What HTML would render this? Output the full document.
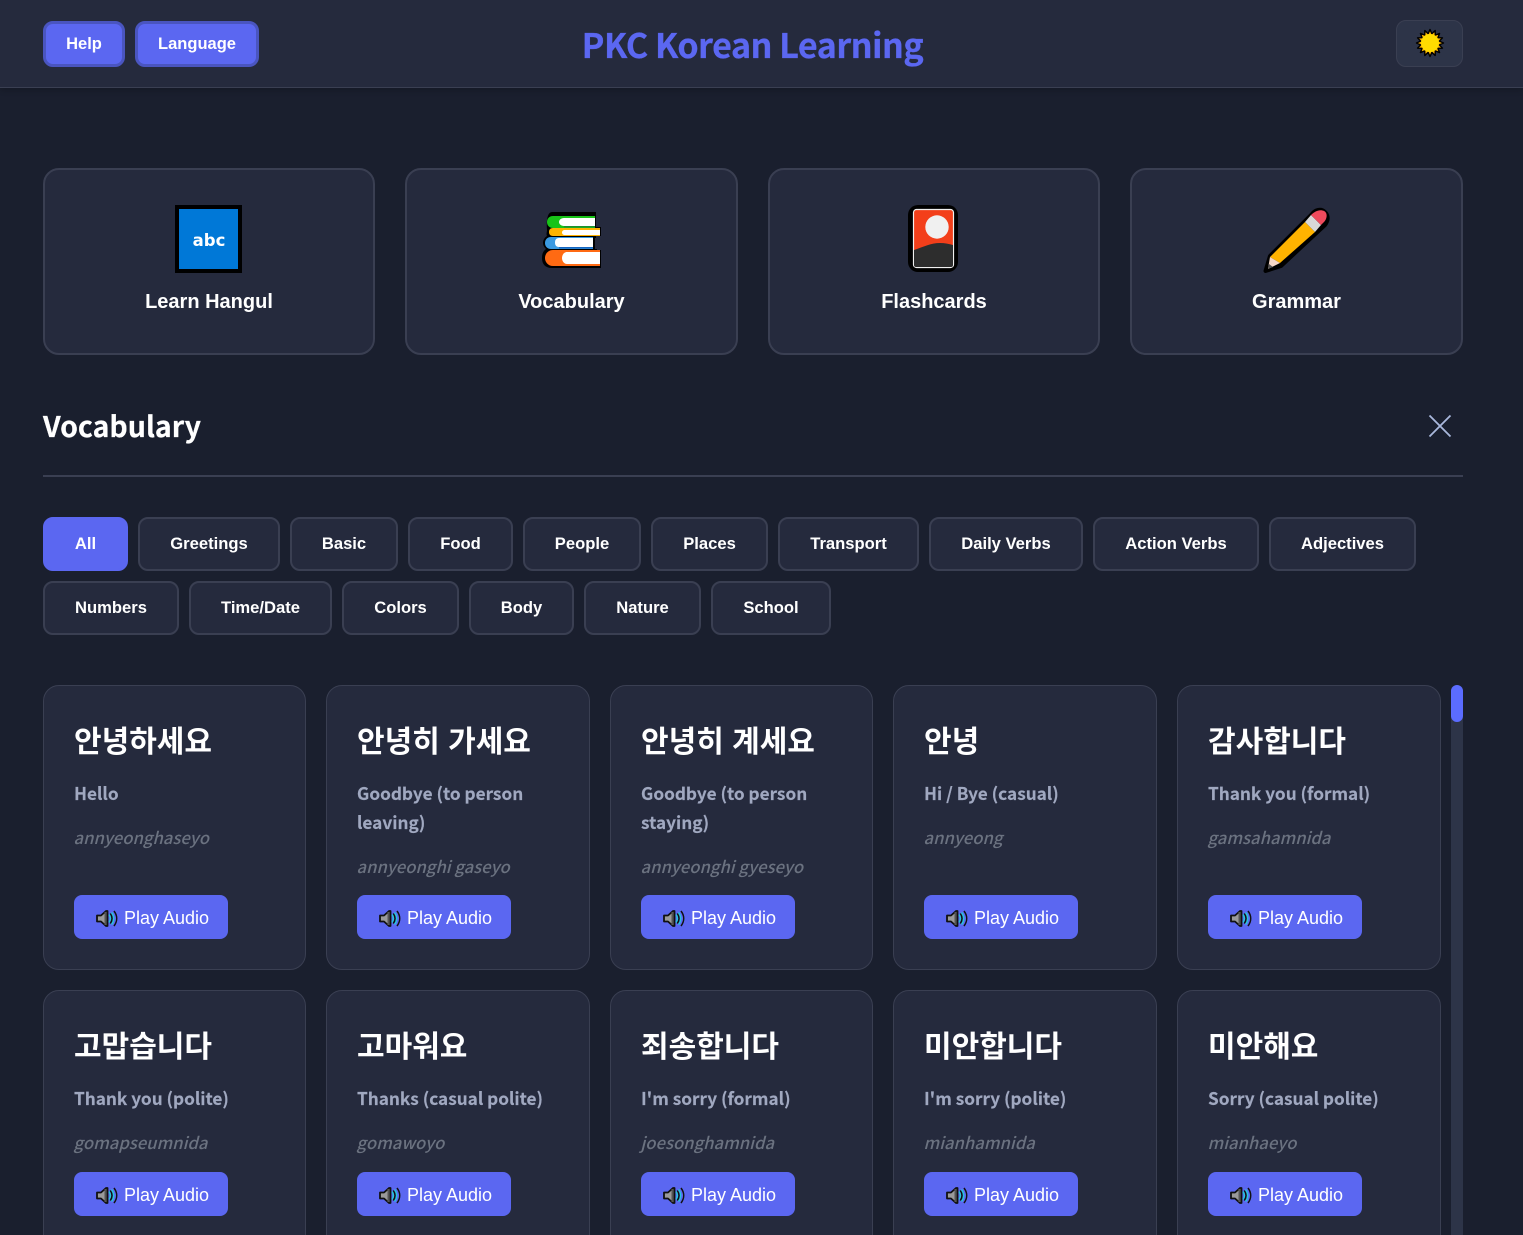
<!DOCTYPE html>
<html lang="en"><head><meta charset="utf-8"><title>PKC Korean Learning</title>
<style>
*{box-sizing:border-box;margin:0;padding:0}
html,body{width:1523px;height:1235px;overflow:hidden;background:#1a1f2e}
body{position:relative;font-family:"Liberation Sans","Noto Sans CJK KR",sans-serif;color:#fff}
.a{position:absolute}
header{position:absolute;left:0;top:0;width:1523px;height:88px;background:#252a3d;border-bottom:1px solid #3a3f52;box-shadow:0 2px 6px rgba(0,0,0,.2)}
.hb{position:absolute;top:21px;height:46px;background:#5b67f1;border:3px solid #4a55c0;border-radius:10px;font-weight:700;font-size:16.5px;line-height:40px;text-align:center;color:#fff}
h1{position:absolute;left:0;top:19px;width:1505px;text-align:center;font:700 34px/50px "Noto Sans CJK KR",sans-serif;color:#5b67f1;letter-spacing:-.45px;-webkit-text-stroke:.3px #5b67f1}
.theme{position:absolute;left:1396px;top:20px;width:67px;height:47px;background:#2d3448;border:1px solid #3a3f52;border-radius:10px}
.nav{position:absolute;top:168px;height:187px;background:#252a3d;border:2px solid #3a3f52;border-radius:16px}
.nav span{position:absolute;left:0;right:0;top:120px;text-align:center;font-weight:700;font-size:20px;line-height:24px;color:#fff}
.nav svg{position:absolute}
h2{position:absolute;left:43px;top:405px;font:700 28.5px/42px "Noto Sans CJK KR",sans-serif;color:#fff;-webkit-text-stroke:.2px #fff}
.f{position:absolute;height:54px;background:#252a3d;border:2px solid #3a3f52;border-radius:10px;font-weight:700;font-size:16.6px;line-height:50px;text-align:center;color:#fff}
.f.on{background:#5b67f1;border-color:#5b67f1}
.c{position:absolute;background:#252a3d;border:1px solid #3a3f52;border-radius:16px}
.c b{position:absolute;left:30px;top:29px;font:700 30px/48px "Noto Sans CJK KR",sans-serif;color:#fff;white-space:nowrap;word-spacing:1.5px}
.c p{position:absolute;left:30px;width:205px;top:92px;font:700 17.2px/29px "Noto Sans CJK KR",sans-serif;color:#a0a8c0;-webkit-text-stroke:.15px #a0a8c0}
.c i{position:absolute;left:29.5px;margin-top:-1px;font:italic 500 16.65px/29px "Noto Sans CJK KR",sans-serif;color:#6b7280;white-space:nowrap}
.p{position:absolute;left:30px;height:44px;width:154px;background:#5b67f1;border-radius:8px;font-size:18px;line-height:46px;color:#fff;padding-left:50px;white-space:nowrap}
.p svg{position:absolute;left:20.500px;top:13px}
</style></head><body>
<svg width="0" height="0" style="position:absolute"><defs>
<g id="spk"><path d="M2 7.500h4l5-4.500h1.500v15H11l-5-4.500H2z" fill="#9a9a9a" stroke="#111" stroke-width="1.800" stroke-linejoin="round"/><path d="M10.500 4v13" stroke="#555" stroke-width="2"/><path d="M14 6.500c1.800 2.500 1.800 5.500 0 8M16.500 4.500c2.800 3.700 2.800 8.300 0 12" fill="none" stroke="#27c4de" stroke-width="1.600"/><path d="M15.300 5.500c2.300 3.300 2.300 6.700 0 10M19 3c3.600 4.800 3.600 10.200 0 15" fill="none" stroke="#111" stroke-width="1.500"/></g>
</defs></svg>

<header>
<div class="hb" style="left:43px;width:82px">Help</div>
<div class="hb" style="left:135px;width:124px">Language</div>
<h1>PKC Korean Learning</h1>
<div class="theme">
<svg class="a" style="left:18px;top:7px" width="30" height="30" viewBox="0 0 30 30"><polygon transform="translate(15 15)" points="13.5,0 9.32,1.85 12.47,5.17 7.89,5.28 9.55,9.55 5.28,7.89 5.17,12.47 1.85,9.32 0,13.5 -1.85,9.32 -5.17,12.47 -5.28,7.89 -9.55,9.55 -7.89,5.28 -12.47,5.17 -9.32,1.85 -13.5,0 -9.32,-1.85 -12.47,-5.17 -7.89,-5.28 -9.55,-9.55 -5.28,-7.89 -5.17,-12.47 -1.85,-9.32 0,-13.5 1.85,-9.32 5.17,-12.47 5.28,-7.89 9.55,-9.55 7.89,-5.28 12.47,-5.17 9.32,-1.85" fill="#ffb300" stroke="#000" stroke-width="1.400" stroke-linejoin="round"/><circle cx="15" cy="15" r="9" fill="#ffdc00"/></svg>
</div>
</header>

<div class="nav" style="left:43px;width:332px">
<svg style="left:130px;top:35px" width="68" height="68" viewBox="0 0 68 68"><rect x="2" y="2" width="63" height="64" fill="#0078d7" stroke="#000" stroke-width="4"/><text x="34" y="41" text-anchor="middle" font-family="DejaVu Sans,sans-serif" font-weight="700" font-size="16.500" fill="#fff">abc</text></svg>
<span>Learn Hangul</span></div>

<div class="nav" style="left:405px;width:333px">
<svg style="left:133px;top:40px" width="64" height="62" viewBox="0 0 64 62">
<path d="M12 2h44v15h5v9h-5v2h-1v11h2v1h4v18H12C5 58 2 54 2 48c0-4 1-7 4-9-2-2-3-4-3-6 0-3 2-6 4-7-1-2 0-4 0-6C6 9 8 2 12 2z" fill="#000"/>
<path d="M13 6h42v12H13C9 18 7 15 7 12s2-6 6-6z" fill="#18c318"/><path d="M24 8h31v8H24c-3 0-5-2-5-4s2-4 5-4z" fill="#fff"/><rect x="24" y="16" width="31" height="1.500" fill="#1f8f2f"/>
<path d="M13 18h47v8H13c-3 0-4-2-4-4s1-4 4-4z" fill="#ffb300"/><path d="M25 20h35v5H25c-2 0-3-1-3-2.500s1-2.500 3-2.500z" fill="#fff"/>
<path d="M11 27h42v12H11c-4 0-6-3-6-6s2-6 6-6z" fill="#3b9ae1"/><path d="M19 28h34v9H19c-3 0-4-2-4-4.500s1-4.500 4-4.500z" fill="#fff"/><rect x="19" y="37" width="34" height="1.500" fill="#1565c0"/>
<path d="M13 40h47v16H13C8 56 5 52 5 48s3-8 8-8z" fill="#ff6a13"/><path d="M27 42h33v12H27c-3 0-5-3-5-6s2-6 5-6z" fill="#fff"/>
</svg>
<span>Vocabulary</span></div>

<div class="nav" style="left:768px;width:332px">
<svg style="left:138px;top:35px" width="52" height="68" viewBox="0 0 52 68"><rect x="0" y="0" width="50" height="67" rx="10" fill="#000"/><rect x="5.500" y="4.500" width="40" height="58" rx="3" fill="#f33f1a" stroke="#f0f0f0" stroke-width="1.200"/><circle cx="29" cy="22" r="11.700" fill="#f0f0f0"/><path d="M6 45c9-3 17-7 26-7 5 0 9 1 13 2v20c0 1.500-1 2-2 2H8c-1 0-2-.5-2-2z" fill="#2d2d2d"/></svg>
<span>Flashcards</span></div>

<div class="nav" style="left:1130px;width:333px">
<svg style="left:131px;top:35px" width="70" height="70" viewBox="0 0 70 70"><path d="M2.500 66L7 51 49 9c3-4 9-6 13-2s3 9 0 13L18 61z" fill="#000" stroke="#000" stroke-width="4" stroke-linejoin="round"/><path d="M7 52L42 17l10 10L17 58z" fill="#ffb300"/><path d="M7 52l10 6-12 6z" fill="#f6d8c8"/><path d="M6 59l4 3-5 2z" fill="#555"/><path d="M42 17l6-7 10 10-6 7z" fill="#d8d8d8"/><path d="M48 10c4-4 9-6 13-4s3 8 0 11l-3 3z" fill="#ef4a5c"/></svg>
<span>Grammar</span></div>

<h2>Vocabulary</h2>
<svg class="a" style="left:1428px;top:414px" width="24" height="24" viewBox="0 0 24 24"><path d="M1.500 1.500l21 21M22.500 1.500l-21 21" stroke="#a9b8dd" stroke-width="1.800" fill="none"/></svg>
<div class="a" style="left:43px;top:475px;width:1420px;height:2px;background:#3a3f52"></div>

<div class="f on" style="left:43px;top:517px;width:85px">All</div>
<div class="f" style="left:138px;top:517px;width:142px">Greetings</div>
<div class="f" style="left:290px;top:517px;width:108px">Basic</div>
<div class="f" style="left:408px;top:517px;width:105px">Food</div>
<div class="f" style="left:523px;top:517px;width:118px">People</div>
<div class="f" style="left:651px;top:517px;width:117px">Places</div>
<div class="f" style="left:778px;top:517px;width:141px">Transport</div>
<div class="f" style="left:929px;top:517px;width:154px">Daily Verbs</div>
<div class="f" style="left:1093px;top:517px;width:166px">Action Verbs</div>
<div class="f" style="left:1269px;top:517px;width:147px">Adjectives</div>
<div class="f" style="left:43px;top:581px;width:136px">Numbers</div>
<div class="f" style="left:189px;top:581px;width:143px">Time/Date</div>
<div class="f" style="left:342px;top:581px;width:117px">Colors</div>
<div class="f" style="left:469px;top:581px;width:105px">Body</div>
<div class="f" style="left:584px;top:581px;width:117px">Nature</div>
<div class="f" style="left:711px;top:581px;width:120px">School</div>

<div class="c" style="left:43px;top:685px;width:263px;height:285px"><b>안녕하세요</b><p>Hello</p><i style="top:138px">annyeonghaseyo</i><div class="p" style="top:209px"><svg width="24" height="20" viewBox="0 0 24 20"><use href="#spk"/></svg>Play Audio</div></div>
<div class="c" style="left:326px;top:685px;width:264px;height:285px"><b>안녕히 가세요</b><p>Goodbye (to person leaving)</p><i style="top:167px">annyeonghi gaseyo</i><div class="p" style="top:209px"><svg width="24" height="20" viewBox="0 0 24 20"><use href="#spk"/></svg>Play Audio</div></div>
<div class="c" style="left:610px;top:685px;width:263px;height:285px"><b>안녕히 계세요</b><p>Goodbye (to person staying)</p><i style="top:167px">annyeonghi gyeseyo</i><div class="p" style="top:209px"><svg width="24" height="20" viewBox="0 0 24 20"><use href="#spk"/></svg>Play Audio</div></div>
<div class="c" style="left:893px;top:685px;width:264px;height:285px"><b>안녕</b><p>Hi / Bye (casual)</p><i style="top:138px">annyeong</i><div class="p" style="top:209px"><svg width="24" height="20" viewBox="0 0 24 20"><use href="#spk"/></svg>Play Audio</div></div>
<div class="c" style="left:1177px;top:685px;width:264px;height:285px"><b>감사합니다</b><p>Thank you (formal)</p><i style="top:138px">gamsahamnida</i><div class="p" style="top:209px"><svg width="24" height="20" viewBox="0 0 24 20"><use href="#spk"/></svg>Play Audio</div></div>

<div class="c" style="left:43px;top:990px;width:263px;height:280px"><b>고맙습니다</b><p>Thank you (polite)</p><i style="top:138px">gomapseumnida</i><div class="p" style="top:181px"><svg width="24" height="20" viewBox="0 0 24 20"><use href="#spk"/></svg>Play Audio</div></div>
<div class="c" style="left:326px;top:990px;width:264px;height:280px"><b>고마워요</b><p>Thanks (casual polite)</p><i style="top:138px">gomawoyo</i><div class="p" style="top:181px"><svg width="24" height="20" viewBox="0 0 24 20"><use href="#spk"/></svg>Play Audio</div></div>
<div class="c" style="left:610px;top:990px;width:263px;height:280px"><b>죄송합니다</b><p>I'm sorry (formal)</p><i style="top:138px">joesonghamnida</i><div class="p" style="top:181px"><svg width="24" height="20" viewBox="0 0 24 20"><use href="#spk"/></svg>Play Audio</div></div>
<div class="c" style="left:893px;top:990px;width:264px;height:280px"><b>미안합니다</b><p>I'm sorry (polite)</p><i style="top:138px">mianhamnida</i><div class="p" style="top:181px"><svg width="24" height="20" viewBox="0 0 24 20"><use href="#spk"/></svg>Play Audio</div></div>
<div class="c" style="left:1177px;top:990px;width:264px;height:280px"><b>미안해요</b><p>Sorry (casual polite)</p><i style="top:138px">mianhaeyo</i><div class="p" style="top:181px"><svg width="24" height="20" viewBox="0 0 24 20"><use href="#spk"/></svg>Play Audio</div></div>

<div class="a" style="left:1451px;top:685px;width:12px;height:550px;background:#2d3448;border-radius:6px 6px 0 0"></div>
<div class="a" style="left:1451px;top:685px;width:12px;height:37px;background:#5b6cff;border-radius:6px"></div>
</body></html>
